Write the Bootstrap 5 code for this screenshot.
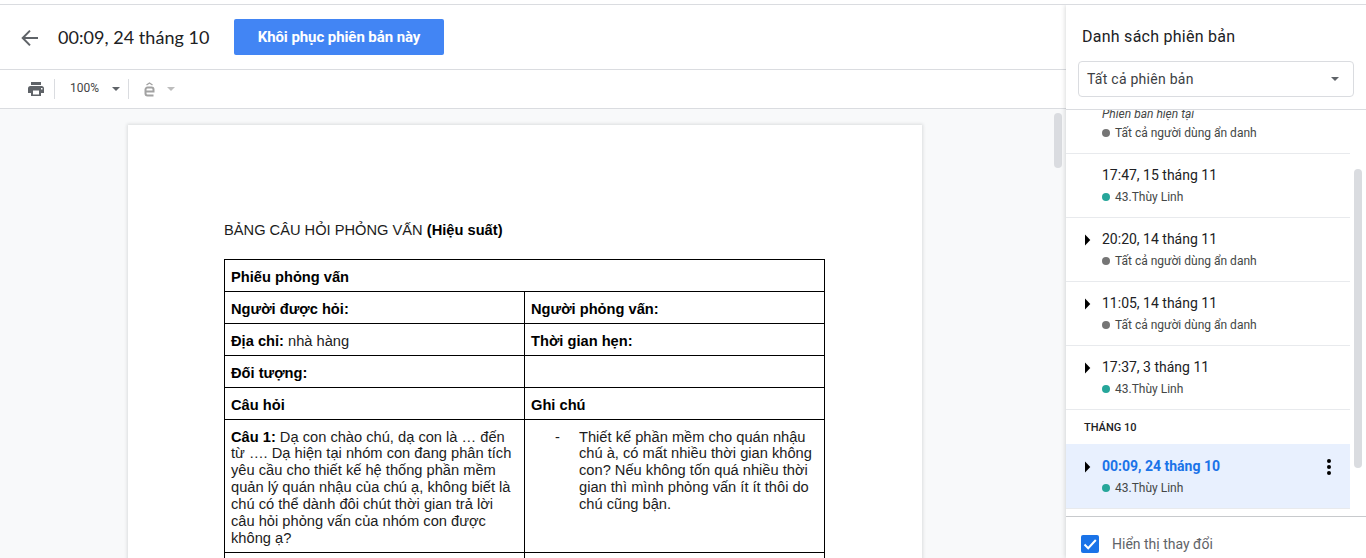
<!DOCTYPE html>
<html lang="vi">
<head>
<meta charset="utf-8">
<meta name="viewport" content="width=device-width, initial-scale=1">
<title>Danh sách phiên bản</title>
<link href="https://cdn.jsdelivr.net/npm/bootstrap@5.3.0/dist/css/bootstrap.min.css" rel="stylesheet">
<style>
body{font-family:Roboto,"Liberation Sans",sans-serif;color:#202124;height:558px;padding-top:4px}
.app{border-top:1px solid #dadce0}
.topbar{height:65px;border-bottom:1px solid #dadce0;padding-left:18px}
.back{width:24px;height:24px;margin:1px 16px 0 0}
.ver-title{font-family:Lato,Roboto,sans-serif;font-size:18px;line-height:24px;width:176px;letter-spacing:.04px}
.restore{width:210px;height:36px;background:#4285f4;color:#fff;border-radius:2px;font-size:15px;font-weight:700;letter-spacing:-.08px;padding:0;border:0;line-height:36px}
.tools{height:39px;border-bottom:1px solid #dadce0;padding-left:27px}
.sep{width:1px;height:20px;background:#dadce0}
.sep-a{margin:0 15px 0 9px}
.sep-b{margin:0 15px 0 8px}
.zoomtxt{font-size:12px;line-height:16px;color:#444;width:42px;padding-bottom:2px}
.accent-caret{margin-left:12px}
.canvas-area{background:#f8f9fa;padding-left:128px;padding-top:16px}
.page{width:794px;height:600px;background:#fff;box-shadow:0 0 3px 1px rgba(60,64,67,.15);padding:97px 0 0 96px;font-family:"Liberation Sans",Arial,sans-serif;font-size:14.667px;line-height:16.87px;color:#1c1c1c;white-space:nowrap}
.page b{color:#000}
.doc-title{height:37px}
.form-table{width:601px;table-layout:fixed;border-collapse:collapse}
.form-table td{border:1px solid #000;height:32px;padding:8.6px 6px 5px 6px;vertical-align:top}
.form-table .tall td{height:133px}
.reply{padding-left:48px}
.dash{display:inline-block;width:24px;margin-left:-24px}
.doc-scroll{margin-top:-16px}
.thumb-doc{width:8px;height:55px;border-radius:4px;background:#dadce0;margin:4px 4px 0 auto}
.side{width:300px;box-shadow:-1px 0 4px rgba(60,64,67,.18);z-index:2}
.side-head{height:105px;border-bottom:1px solid #dadce0;padding:20px 12px 0 12px}
.side-title{font-size:16px;line-height:24px;padding-left:4px;letter-spacing:.26px}
.picker{height:36px;border:1px solid #dadce0;border-radius:4px;font-size:14px;color:#3c4043;margin-top:12px;padding:0 14px 0 8px;letter-spacing:.26px}
.versions{width:284px}
.ver{height:64px;border-bottom:1px solid #e8eaed;padding:11px 0 0 18px}
.ver .tri{width:18px;height:20px;flex:none;padding-top:1px}
.when{font-size:14px;line-height:20px}
.who{font-size:12px;line-height:16px;color:#444746;margin-top:4px}
.dot{width:8px;height:8px;border-radius:50%;background:#26a69a;margin-right:5px}
.dot.anon{background:#757575}
.ver.clipped{margin-top:-20px}
.ver.clipped .who{margin-top:3px}
.current{font-size:12px;line-height:16px;font-style:italic;color:#444746;padding-top:5px}
.month{height:34px;font-size:11px;font-weight:500;line-height:35px;padding-left:18px}
.ver.chosen{background:#e8f0fe;height:65px;padding-top:12px}
.chosen .tri{padding-top:1px}
.chosen .when{color:#1a73e8;font-weight:700}
.kebab{margin:3px 16px 0 0}
.thumb-side{width:8px;height:299px;border-radius:4px;background:#dadce0;margin:59px 4px 0 auto}
.side-foot{height:42px;border-top:1px solid #c8cacd;padding:17px 0 0 15px;font-size:14px;line-height:20px;color:#5f6368}
.check{width:18px;height:18px;background:#1a73e8;border-radius:2px;margin:1px 13px 0 0}
svg{display:block;flex:none}
</style>
</head>
<body class="overflow-hidden bg-white">
<div class="app d-flex h-100 overflow-hidden">
  <main class="flex-grow-1 d-flex flex-column overflow-hidden">
    <header class="topbar d-flex align-items-center flex-shrink-0">
      <svg class="back" viewBox="0 0 24 24"><path d="M20 12H5M12 4.600 4.700 12l7.300 7.400" fill="none" stroke="#5f6368" stroke-width="2"/></svg>
      <div class="ver-title text-nowrap">00:09, 24 tháng 10</div>
      <button class="btn restore">Khôi phục phiên bản này</button>
    </header>
    <div class="tools d-flex align-items-center flex-shrink-0">
      <svg width="18" height="18" viewBox="0 0 18 18"><path fill="#5f6368" fill-rule="evenodd" d="M4 2h10v3H4zM3.500 6h11A2.500 2.500 0 0 1 17 8.500V13h-3v3H4v-3H1V8.500A2.500 2.500 0 0 1 3.500 6zM6 10.500v4h6v-4zM14 8v1.500h1.500V8z"/></svg>
      <span class="sep sep-a"></span>
      <span class="zoomtxt">100%</span>
      <svg width="8" height="4" viewBox="0 0 8 4"><path fill="#5f6368" d="M0 0h8L4 4z"/></svg>
      <span class="sep sep-b"></span>
      <svg width="11" height="15" viewBox="0 0 11 15"><path fill="none" stroke="#a2a2a2" stroke-width="1.300" d="m2.500 3 3-2 3 2"/><path fill="none" stroke="#a2a2a2" stroke-width="2" d="M9.500 13.500h-6a2 2 0 0 1-2-2V7.500a2 2 0 0 1 2-2h4a2 2 0 0 1 2 2v2h-8"/></svg>
      <svg class="accent-caret" width="8" height="4" viewBox="0 0 8 4"><path fill="#bdbdbd" d="M0 0h8L4 4z"/></svg>
    </div>
    <div class="canvas-area flex-grow-1 d-flex overflow-hidden align-items-start">
      <article class="page flex-shrink-0">
        <div class="doc-title">BẢNG CÂU HỎI PHỎNG VẤN <b>(Hiệu suất)</b></div>
        <table class="form-table">
          <tr><td colspan="2"><b>Phiếu phỏng vấn</b></td></tr>
          <tr><td><b>Người được hỏi:</b></td><td><b>Người phỏng vấn:</b></td></tr>
          <tr><td><b>Địa chỉ:</b> nhà hàng</td><td><b>Thời gian hẹn:</b></td></tr>
          <tr><td><b>Đối tượng:</b></td><td></td></tr>
          <tr><td><b>Câu hỏi</b></td><td><b>Ghi chú</b></td></tr>
          <tr class="tall"><td><b>Câu 1:</b> Dạ con chào chú, dạ con là … đến<br>từ …. Dạ hiện tại nhóm con đang phân tích<br>yêu cầu cho thiết kế hệ thống phần mềm<br>quản lý quán nhậu của chú ạ, không biết là<br>chú có thể dành đôi chút thời gian trả lời<br>câu hỏi phỏng vấn của nhóm con được<br>không ạ?</td>
          <td><div class="reply"><span class="dash">-</span>Thiết kế phần mềm cho quán nhậu<br>chú à, có mất nhiều thời gian không<br>con? Nếu không tốn quá nhiều thời<br>gian thì mình phỏng vấn ít ít thôi do<br>chú cũng bận.</div></td></tr>
          <tr><td></td><td></td></tr>
        </table>
      </article>
      <div class="doc-scroll flex-grow-1"><div class="thumb-doc"></div></div>
    </div>
  </main>
  <aside class="side bg-white d-flex flex-column flex-shrink-0">
    <div class="side-head flex-shrink-0">
      <div class="side-title">Danh sách phiên bản</div>
      <div class="picker d-flex align-items-center justify-content-between"><span>Tất cả phiên bản</span><svg width="8" height="4" viewBox="0 0 8 4"><path fill="#5f6368" d="M0 0h8L4 4z"/></svg></div>
    </div>
    <div class="flex-grow-1 d-flex overflow-hidden">
      <div class="versions">
        <div class="ver clipped d-flex"><span class="tri"></span><div><div class="current">Phiên bản hiện tại</div><div class="who d-flex align-items-center"><span class="dot anon"></span>Tất cả người dùng ẩn danh</div></div></div>
        <div class="ver d-flex"><span class="tri"></span><div><div class="when">17:47, 15 tháng 11</div><div class="who d-flex align-items-center"><span class="dot"></span>43.Thùy Linh</div></div></div>
        <div class="ver d-flex"><span class="tri"><svg width="8" height="20" viewBox="0 0 8 20"><path d="M1 4.500 6.300 10 1 15.500z"/></svg></span><div><div class="when">20:20, 14 tháng 11</div><div class="who d-flex align-items-center"><span class="dot anon"></span>Tất cả người dùng ẩn danh</div></div></div>
        <div class="ver d-flex"><span class="tri"><svg width="8" height="20" viewBox="0 0 8 20"><path d="M1 4.500 6.300 10 1 15.500z"/></svg></span><div><div class="when">11:05, 14 tháng 11</div><div class="who d-flex align-items-center"><span class="dot anon"></span>Tất cả người dùng ẩn danh</div></div></div>
        <div class="ver d-flex"><span class="tri"><svg width="8" height="20" viewBox="0 0 8 20"><path d="M1 4.500 6.300 10 1 15.500z"/></svg></span><div><div class="when">17:37, 3 tháng 11</div><div class="who d-flex align-items-center"><span class="dot"></span>43.Thùy Linh</div></div></div>
        <div class="month">THÁNG 10</div>
        <div class="ver chosen d-flex"><span class="tri"><svg width="8" height="20" viewBox="0 0 8 20"><path d="M1 4.500 6.300 10 1 15.500z"/></svg></span><div class="flex-grow-1"><div class="when">00:09, 24 tháng 10</div><div class="who d-flex align-items-center"><span class="dot"></span>43.Thùy Linh</div></div>
          <svg class="kebab" width="10" height="16" viewBox="0 0 10 16"><circle cx="5" cy="2" r="2"/><circle cx="5" cy="8" r="2"/><circle cx="5" cy="14" r="2"/></svg></div>
      </div>
      <div class="flex-grow-1"><div class="thumb-side"></div></div>
    </div>
    <div class="side-foot d-flex flex-shrink-0"><span class="check"><svg width="18" height="18" viewBox="0 0 18 18"><path fill="none" stroke="#fff" stroke-width="2" d="m3.500 9.500 3.700 3.700L14.800 5"/></svg></span>Hiển thị thay đổi</div>
  </aside>
</div>
</body>
</html>
